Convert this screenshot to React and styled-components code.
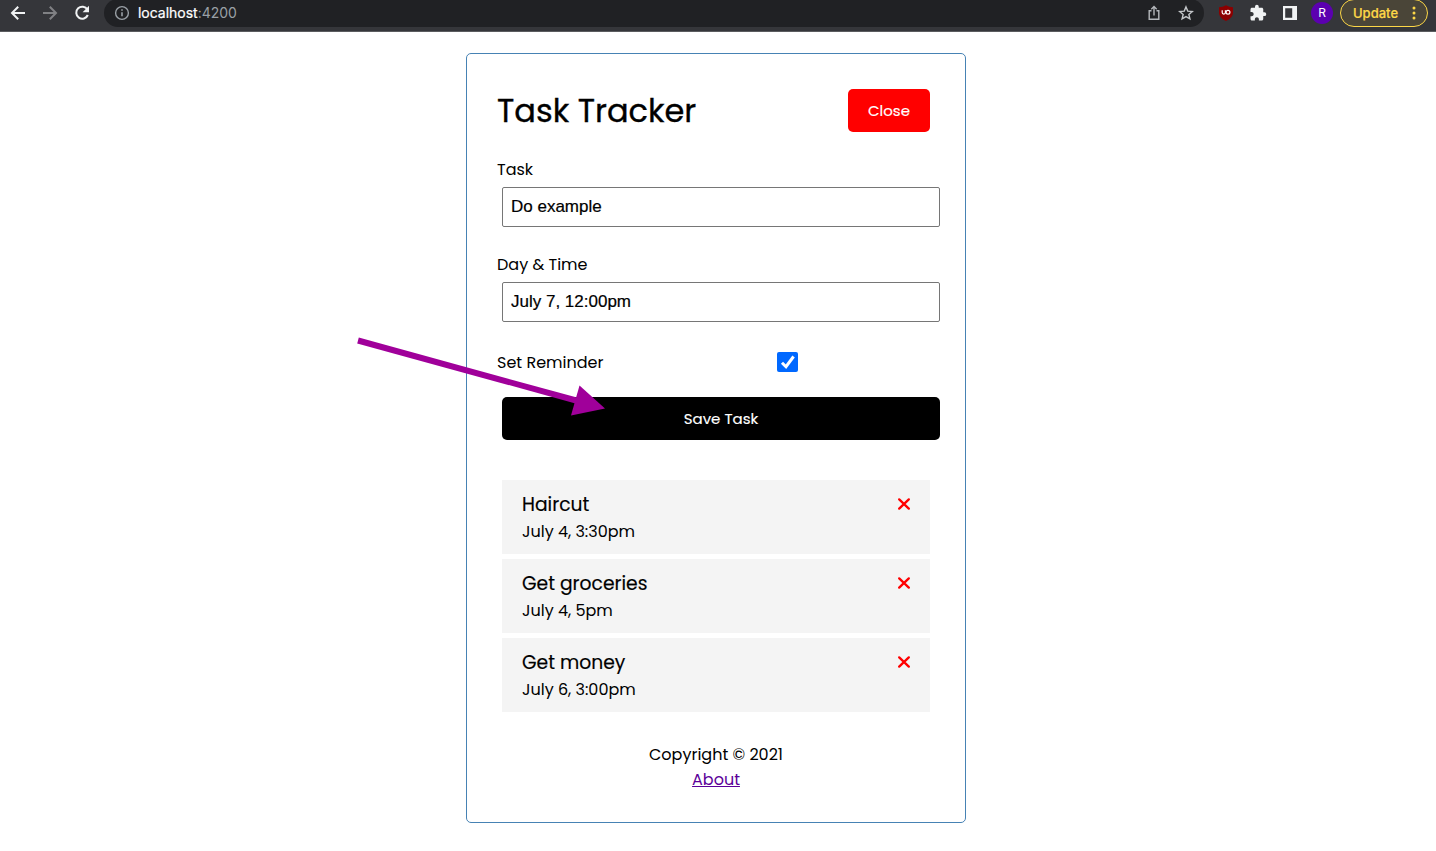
import React from 'react';
import styled, { createGlobalStyle } from 'styled-components';
import { MdExtension } from 'react-icons/md';

const GlobalStyle = createGlobalStyle`
  * { box-sizing: border-box; margin: 0; padding: 0; }
  body {
    background: #fff;
    color: #000;
    font: 400 16px/25px Poppins, Inter, sans-serif;
    overflow: hidden;
  }
`;

const Page = styled.div`
  position: relative;
  height: 851px;
`;

const Toolbar = styled.header`
  display: flex;
  align-items: flex-start;
  height: 32px;
  padding-right: 8px;
  overflow: hidden;
  background: #35363a;
  border-bottom: 1px solid #5b5c5f;
`;

const NavButtons = styled.nav`
  display: flex;
  gap: 12px;
  padding: 3px 12px 0 8px;
  svg { display: block; }
`;

const AddressBar = styled.div`
  display: flex;
  align-items: center;
  width: 1100px;
  height: 28px;
  margin-top: -1px;
  padding: 0 8px;
  border-radius: 14px;
  background: #202124;
  svg { flex: none; }
`;

const Url = styled.span`
  flex: 1;
  margin-left: 6px;
  color: #9aa0a6;
  font: 400 14px/20px Inter, sans-serif;
  letter-spacing: -0.02px;
  b { color: #fff; font-weight: 400; -webkit-text-stroke: 0.2px #fff; }
`;

const AddressActions = styled.div`
  display: flex;
  gap: 12px;
`;

const Extensions = styled.div`
  display: flex;
  align-items: center;
  gap: 12px;
  height: 26px;
  margin-left: 12px;
`;

const ExtensionIcon = styled.span`
  display: grid;
  place-items: center;
  width: 20px;
  height: 20px;
  color: #f1f3f4;
`;

const Avatar = styled.span`
  width: 22px;
  height: 22px;
  margin: 0 -1px;
  border-radius: 50%;
  background: #5b00b0;
  color: #fff;
  font: 400 12px/22px Inter, sans-serif;
  text-align: center;
`;

const UpdateButton = styled.button`
  display: flex;
  align-items: center;
  justify-content: space-between;
  width: 88px;
  height: 28px;
  margin: -1px 0 0 8px;
  padding: 0 8px 0 12px;
  border: 1px solid #fdd747;
  border-radius: 14px;
  background: #4a4538;
  color: #fdd747;
  font: 500 13px/20px Inter, sans-serif;
  -webkit-text-stroke: 0.2px #fdd747;
`;

const Container = styled.main`
  width: 500px;
  height: 770px;
  margin: 21px auto 0 466px;
  padding: 30px;
  border: 1px solid steelblue;
  border-radius: 5px;
`;

const TitleBar = styled.header`
  display: flex;
  align-items: center;
  justify-content: space-between;
  height: 53px;
  margin-bottom: 20px;
  padding-right: 5px;
`;

const Title = styled.h1`
  padding-top: 1px;
  font-size: 32px;
  font-weight: 400;
  line-height: 48px;
  white-space: nowrap;
  -webkit-text-stroke: 0.35px #000;
`;

const Button = styled.button`
  display: block;
  width: ${(p) => p.$width}px;
  height: 43px;
  padding-bottom: 1px;
  border: 0;
  border-radius: 5px;
  background: ${(p) => p.$color};
  color: #fff;
  font: inherit;
  font-size: 15px;
  -webkit-text-stroke: 0.15px #fff;
`;

const Form = styled.form`
  margin-bottom: 40px;
  ${Button} { margin: 20px 0 0 5px; }
`;

const Field = styled.div`
  display: flow-root;
  margin-bottom: 20px;
`;

const Label = styled.label`
  display: block;
  height: 25px;
`;

const Input = styled.input`
  display: block;
  width: 438px;
  height: 40px;
  margin: 5px;
  padding: 0 8px 1px;
  border: 1px solid #767676;
  border-radius: 2px;
  background: #fff;
  color: #000;
  font: 400 17px/20px "Liberation Sans", Arial, sans-serif;
  outline: none;
  -webkit-text-stroke: 0.2px #000;
`;

const ReminderRow = styled.div`
  display: flex;
  align-items: center;
  justify-content: space-between;
  height: 30px;
  padding-right: 137px;
`;

const Checkbox = styled.span`
  display: grid;
  place-items: center;
  width: 21px;
  height: 20px;
  border-radius: 2px;
  background: #0068ff;
`;

const TaskList = styled.section`
  display: flex;
  flex-direction: column;
  gap: 5px;
  margin: 0 5px;
`;

const Task = styled.article`
  height: 74px;
  padding: 10px 20px;
  background: #f4f4f4;
`;

const TaskHeading = styled.h3`
  display: flex;
  align-items: center;
  justify-content: space-between;
  height: 28px;
  margin-bottom: 1px;
  font-size: 18.72px;
  font-weight: 400;
  -webkit-text-stroke: 0.15px #000;
`;

const TaskTime = styled.p`
  height: 25px;
`;

const Footer = styled.footer`
  margin-top: 30px;
  text-align: center;
`;

const AboutLink = styled.a`
  color: #5c0099;
  text-decoration: underline;
`;

const Arrow = styled.svg`
  position: absolute;
  left: 350px;
  top: 330px;
  pointer-events: none;
`;

const tasks = [
  { name: 'Haircut', time: 'July 4, 3:30pm' },
  { name: 'Get groceries', time: 'July 4, 5pm' },
  { name: 'Get money', time: 'July 6, 3:00pm' },
];

const NavIcon = ({ d, color = '#f1f3f4' }) => (
  <svg width="20" height="20" viewBox="0 0 20 20" fill="none" stroke={color} strokeWidth="2">
    <path d={d} />
  </svg>
);

export default function App() {
  return (
    <Page>
      <GlobalStyle />
      <Toolbar>
        <NavButtons>
          <NavIcon d="M17 10H4.2M10.2 3.7L4 10l6.2 6.3" />
          <NavIcon d="M3 10h12.8M9.8 3.7L16 10l-6.2 6.3" color="#808184" />
          <svg width="20" height="20" viewBox="0 0 20 20">
            <path d="M15.4 6.6A6 6 0 1 0 15.8 12" fill="none" stroke="#f1f3f4" strokeWidth="2" />
            <path d="M17 2.8v6.4h-6.4z" fill="#f1f3f4" />
          </svg>
        </NavButtons>
        <AddressBar>
          <svg width="20" height="20" viewBox="0 0 20 20" fill="none" stroke="#9aa0a6">
            <circle cx="10" cy="10" r="6.4" strokeWidth="1.4" />
            <path d="M10 9.2v4.1M10 6.2v1.6" strokeWidth="1.6" />
          </svg>
          <Url><b>localhost</b>:4200</Url>
          <AddressActions>
            <svg width="20" height="20" viewBox="0 0 20 20" fill="none" stroke="#b4b7bb" strokeWidth="1.4">
              <path d="M7.5 7.8H5.2v8.5h9.6V7.8h-2.3M10 12.5V3.8M7.3 6.2L10 3.5l2.7 2.7" />
            </svg>
            <svg width="20" height="20" viewBox="0 0 20 20" fill="none" stroke="#c4c7ca" strokeWidth="1.4">
              <path d="M10 3.9l1.75 4.2 4.55.4-3.45 3 1.05 4.4L10 13.6 6.1 15.9l1.05-4.4-3.45-3 4.55-.4z" />
            </svg>
          </AddressActions>
        </AddressBar>
        <Extensions>
          <svg width="20" height="20" viewBox="0 0 20 20">
            <path d="M10 2.2c2.2 1.2 4.5 1.9 7 2v5.4c0 4-3 6.6-7 8.4-4-1.8-7-4.4-7-8.4V4.200c2.500-.1 4.800-.8 7-2z" fill="#8c0000" />
            <path d="M6.200 7.300v2.300q0 1.500 1.600 1.500t1.600-1.500V7.300" fill="none" stroke="#fff" strokeWidth="1.200" />
            <circle cx="12" cy="9.200" r="1.900" fill="none" stroke="#fff" strokeWidth="1.200" />
          </svg>
          <ExtensionIcon><MdExtension size={18} /></ExtensionIcon>
          <svg width="20" height="20" viewBox="0 0 20 20">
            <path d="M3 3h14v14H3zM5.2 5.3v9.4h7V5.3z" fill="#f1f3f4" fillRule="evenodd" />
          </svg>
          <Avatar>R</Avatar>
        </Extensions>
        <UpdateButton>
          Update
          <svg width="10" height="16" viewBox="0 0 10 16" fill="#fdd747">
            <circle cx="5" cy="3" r="1.5" />
            <circle cx="5" cy="8" r="1.5" />
            <circle cx="5" cy="13" r="1.5" />
          </svg>
        </UpdateButton>
      </Toolbar>

      <Container>
        <TitleBar>
          <Title>Task Tracker</Title>
          <Button $width={82} $color="#ff0000">Close</Button>
        </TitleBar>
        <Form>
          <Field>
            <Label>Task</Label>
            <Input defaultValue="Do example" />
          </Field>
          <Field>
            <Label>Day &amp; Time</Label>
            <Input defaultValue="July 7, 12:00pm" />
          </Field>
          <ReminderRow>
            <span>Set Reminder</span>
            <Checkbox>
              <svg width="16" height="16" viewBox="0 0 16 16" fill="none" stroke="#fff" strokeWidth="3">
                <path d="M2 8.7l4 4L13.6 2.5" />
              </svg>
            </Checkbox>
          </ReminderRow>
          <Button type="button" $width={438} $color="#000">Save Task</Button>
        </Form>
        <TaskList>
          {tasks.map((t) => (
            <Task key={t.name}>
              <TaskHeading>
                {t.name}
                <svg width="12" height="12" viewBox="0 0 12 12" fill="none" stroke="#f00" strokeWidth="2.3" strokeLinecap="round">
                  <path d="M1.2 1.4l9.6 9.2M10.8 1.4L1.2 10.6" />
                </svg>
              </TaskHeading>
              <TaskTime>{t.time}</TaskTime>
            </Task>
          ))}
        </TaskList>
        <Footer>
          <p>Copyright © 2021</p>
          <AboutLink href="#about">About</AboutLink>
        </Footer>
      </Container>

      <Arrow width="265" height="95" viewBox="0 0 265 95">
        <path d="M8 10.5L228 71" stroke="#a0009a" strokeWidth="6" />
        <path d="M229.5 55.5L255 78.5 221 85.5z" fill="#a0009a" />
      </Arrow>
    </Page>
  );
}
